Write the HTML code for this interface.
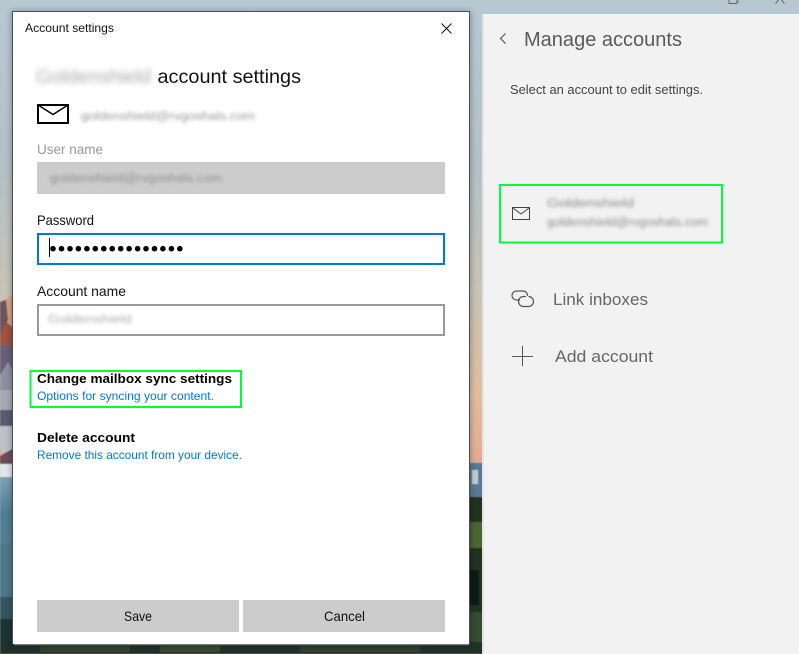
<!DOCTYPE html>
<html lang="en">
<head>
<meta charset="utf-8">
<title>Account settings</title>
<style>
html,body{margin:0;padding:0;width:799px;height:654px;overflow:hidden;background:#b7c8d3}
svg{display:block;position:absolute;left:0;top:0}
text{font-family:"Liberation Sans",sans-serif}
</style>
</head>
<body>
<svg width="799" height="654" viewBox="0 0 799 654" xmlns="http://www.w3.org/2000/svg">
<defs>
<linearGradient id="sky" x1="0" y1="0" x2="0" y2="1">
<stop offset="0" stop-color="#b7c8d3"/>
<stop offset=".35" stop-color="#b4c0c6"/>
<stop offset=".62" stop-color="#c6c3b7"/>
<stop offset=".85" stop-color="#dfbd9f"/>
<stop offset="1" stop-color="#e3ab92"/>
</linearGradient>
<linearGradient id="low" x1="0" y1="0" x2="0" y2="1">
<stop offset="0" stop-color="#7f9fb2"/>
<stop offset=".55" stop-color="#4f7d96"/>
<stop offset="1" stop-color="#55808f"/>
</linearGradient>
<filter id="b2" x="-10%" y="-80%" width="120%" height="260%"><feGaussianBlur stdDeviation="1.900"/></filter>
<filter id="b3" x="-10%" y="-80%" width="120%" height="260%"><feGaussianBlur stdDeviation="3"/></filter>
<filter id="s" x="-10%" y="-10%" width="120%" height="120%"><feGaussianBlur stdDeviation="3"/></filter>
<filter id="m"><feGaussianBlur stdDeviation=".6"/></filter>
</defs>

<!-- wallpaper -->
<rect width="799" height="654" fill="#b7c8d3"/>
<rect x="0" y="0" width="483" height="464" fill="url(#sky)"/>
<g filter="url(#m)">
<polygon points="0,304 5,300 13,295 14,345 0,345" fill="#d9a27f"/>
<polygon points="0,302 6,300 8,320 2,335 0,335" fill="#6d5360"/>
<polygon points="0,335 6,322 14,328 14,350 0,352" fill="#a0523f"/>
<polygon points="0,345 14,345 14,392 0,392" fill="#6a5f78"/>
<polygon points="0,375 8,362 14,372 14,395 0,392" fill="#8d8fa0"/>
<rect x="0" y="390" width="14" height="22" fill="#a4a9b4"/>
<rect x="0" y="410" width="14" height="18" fill="#5c5a72"/>
<rect x="0" y="426" width="14" height="26" fill="#bcc1c7"/>
<polygon points="0,456 14,448 14,463 0,470" fill="#6d4d5c"/>
<rect x="0" y="464" width="14" height="13" fill="#e3e6e8"/>
<rect x="0" y="477" width="14" height="66" fill="url(#low)"/>
<rect x="0" y="543" width="14" height="54" fill="#4f7889"/>
<rect x="0" y="597" width="14" height="22" fill="#35565e"/>
<rect x="0" y="619" width="14" height="35" fill="#1f3633"/>
<rect x="469" y="463" width="14" height="34" fill="#5a7a95"/>
<rect x="472" y="470" width="6" height="14" fill="#c0ccd4"/>
<rect x="469" y="497" width="14" height="157" fill="#233223"/>
<rect x="470" y="522" width="13" height="26" fill="#4c6535"/>
<rect x="469" y="570" width="10" height="35" fill="#111c18"/>
<rect x="470" y="612" width="13" height="30" fill="#364d30"/>
<rect x="0" y="645" width="483" height="9" fill="#24322a"/>
<rect x="40" y="646" width="90" height="6" fill="#35452f"/>
<rect x="160" y="646" width="60" height="6" fill="#3c4b36"/>
<rect x="300" y="646" width="120" height="6" fill="#35432f"/>
</g>

<!-- peeking window controls -->
<path d="M729 0V3.500H737V0M737 1.500H739" fill="none" stroke="#666" stroke-width="1"/>
<path d="M775.500 3.500L778.500 0M784.500 3.500L781.500 0" fill="none" stroke="#666" stroke-width="1"/>

<!-- right panel -->
<rect x="483" y="14" width="316" height="640" fill="#f2f2f2"/>
<rect x="482" y="14" width="2" height="640" fill="#e4e4e4"/>
<path d="M505.500 33.500L500.500 38.500L505.500 43.500" fill="none" stroke="#555" stroke-width="1.200"/>
<text x="524" y="46" font-size="20" fill="#5a5a5a" textLength="158" lengthAdjust="spacingAndGlyphs">Manage accounts</text>
<text x="510" y="94" font-size="12.500" fill="#444" textLength="193" lengthAdjust="spacingAndGlyphs">Select an account to edit settings.</text>

<rect x="500" y="185" width="222" height="57.500" fill="none" stroke="#0f3" stroke-width="2"/>
<rect x="512.500" y="207.500" width="17" height="12" fill="none" stroke="#444" stroke-width="1"/>
<path d="M513 208L521 214L529 208" fill="none" stroke="#444" stroke-width="1"/>
<text x="547" y="207" font-size="11.500" fill="#888" filter="url(#b2)" textLength="87" lengthAdjust="spacingAndGlyphs">Goldenshield</text>
<text x="547" y="226" font-size="11.500" fill="#888" filter="url(#b2)" textLength="161" lengthAdjust="spacingAndGlyphs">goldenshield@rvgoshals.com</text>

<path d="M520 300H516.500A4.500 4.500 0 0 1 516.500 291H523A4.500 4.500 0 0 1 527.500 296" fill="none" stroke="#555" stroke-width="1.200"/>
<path d="M526 296.500H523.500A5 5 0 0 0 523.500 306.500H528.500A5 5 0 0 0 528.500 296.500" fill="none" stroke="#555" stroke-width="1.200"/>
<text x="553" y="305" font-size="17" fill="#666" textLength="95" lengthAdjust="spacingAndGlyphs">Link inboxes</text>
<path d="M512 356.500H533M522.500 346V366" fill="none" stroke="#555" stroke-width="1"/>
<text x="555" y="362" font-size="17" fill="#666" textLength="98" lengthAdjust="spacingAndGlyphs">Add account</text>

<!-- dialog -->
<rect x="11" y="11" width="460" height="636" fill="#000" opacity=".28" filter="url(#s)"/>
<rect x="13" y="12" width="456" height="632" fill="#fff"/>
<path d="M12.500 644V11.500H469.500V644" fill="none" stroke="#4a4f52" stroke-width="1"/>

<text x="25" y="32" font-size="12" fill="#111" textLength="89" lengthAdjust="spacingAndGlyphs">Account settings</text>
<path d="M441.500 23.500L451.500 33.500M451.500 23.500L441.500 33.500" fill="none" stroke="#111" stroke-width="1"/>

<text x="36" y="83" font-size="19.500" fill="#aaa" filter="url(#b3)" textLength="115" lengthAdjust="spacingAndGlyphs">Goldenshield</text>
<text x="157.500" y="83" font-size="19.500" fill="#111" textLength="143.500" lengthAdjust="spacingAndGlyphs">account settings</text>

<rect x="38" y="105" width="30" height="18" fill="none" stroke="#000" stroke-width="2"/>
<path d="M38 105L53 114.500L68 105" fill="none" stroke="#000" stroke-width="1.500"/>
<text x="81" y="120" font-size="11.500" fill="#999" filter="url(#b2)" textLength="174" lengthAdjust="spacingAndGlyphs">goldenshield@rvgoshals.com</text>

<text x="37" y="154" font-size="14" fill="#999" textLength="66" lengthAdjust="spacingAndGlyphs">User name</text>
<rect x="37" y="162" width="408" height="32" fill="#ccc"/>
<text x="50" y="182" font-size="11.500" fill="#8f8f8f" filter="url(#b2)" textLength="172" lengthAdjust="spacingAndGlyphs">goldenshield@rvgoshals.com</text>

<text x="37" y="225" font-size="14" fill="#111" textLength="57" lengthAdjust="spacingAndGlyphs">Password</text>
<rect x="38" y="234" width="406" height="30" fill="#fff" stroke="#0078d7" stroke-width="2"/>
<g fill="#000">
<circle cx="53" cy="248.700" r="2.800"/><circle cx="61.500" cy="248.700" r="2.800"/><circle cx="70" cy="248.700" r="2.800"/><circle cx="78.400" cy="248.700" r="2.800"/>
<circle cx="86.900" cy="248.700" r="2.800"/><circle cx="95.300" cy="248.700" r="2.800"/><circle cx="103.800" cy="248.700" r="2.800"/><circle cx="112.200" cy="248.700" r="2.800"/>
<circle cx="120.700" cy="248.700" r="2.800"/><circle cx="129.100" cy="248.700" r="2.800"/><circle cx="137.600" cy="248.700" r="2.800"/><circle cx="146" cy="248.700" r="2.800"/>
<circle cx="154.500" cy="248.700" r="2.800"/><circle cx="162.900" cy="248.700" r="2.800"/><circle cx="171.400" cy="248.700" r="2.800"/><circle cx="179.800" cy="248.700" r="2.800"/>
</g>
<rect x="49" y="238" width="1" height="19" fill="#000"/>

<text x="37" y="296" font-size="14" fill="#111" textLength="89" lengthAdjust="spacingAndGlyphs">Account name</text>
<rect x="38" y="305" width="406" height="30" fill="#fff" stroke="#999" stroke-width="2"/>
<text x="48" y="323" font-size="11.500" fill="#aaa" filter="url(#b2)" textLength="84" lengthAdjust="spacingAndGlyphs">Goldenshield</text>

<rect x="30.500" y="371" width="210.500" height="36" fill="none" stroke="#0f3" stroke-width="2"/>
<text x="37" y="383" font-size="13" font-weight="700" fill="#000" textLength="195" lengthAdjust="spacingAndGlyphs">Change mailbox sync settings</text>
<text x="37" y="400" font-size="12" fill="#0078d7" textLength="177" lengthAdjust="spacingAndGlyphs">Options for syncing your content.</text>
<text x="37" y="442" font-size="13" font-weight="700" fill="#000" textLength="98" lengthAdjust="spacingAndGlyphs">Delete account</text>
<text x="37" y="459" font-size="12" fill="#0078d7" textLength="205" lengthAdjust="spacingAndGlyphs">Remove this account from your device.</text>

<rect x="37" y="600" width="202" height="32" fill="#ccc"/>
<rect x="243" y="600" width="202" height="32" fill="#ccc"/>
<text x="124" y="621" font-size="14" fill="#111" textLength="28" lengthAdjust="spacingAndGlyphs">Save</text>
<text x="324" y="621" font-size="14" fill="#111" textLength="41" lengthAdjust="spacingAndGlyphs">Cancel</text>
</svg>
</body>
</html>
